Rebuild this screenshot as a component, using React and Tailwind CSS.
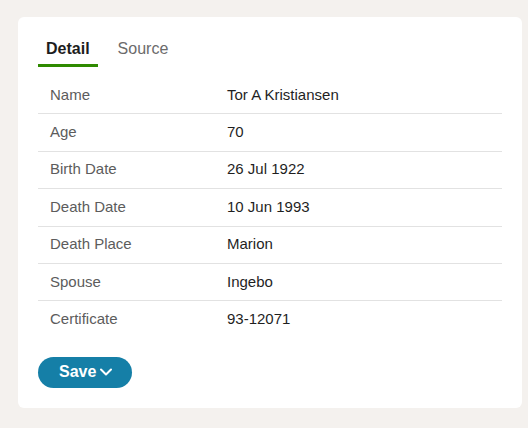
import React, { useState } from 'react';

const rows = [
  ['Name', 'Tor A Kristiansen'],
  ['Age', '70'],
  ['Birth Date', '26 Jul 1922'],
  ['Death Date', '10 Jun 1993'],
  ['Death Place', 'Marion'],
  ['Spouse', 'Ingebo'],
  ['Certificate', '93-12071'],
];

function Chevron() {
  return (
    <svg width="12" height="8" viewBox="0 0 12 8" fill="none" stroke="currentColor" strokeWidth="2" strokeLinecap="round" strokeLinejoin="round">
      <polyline points="1,1.5 6,6.5 11,1.5" />
    </svg>
  );
}

export default function App() {
  const [tab, setTab] = useState('detail');

  return (
    <div
      className="min-h-screen bg-[#f4f1ee] pt-[17px] pl-[18px] pr-[6px]"
      style={{ fontFamily: '"Liberation Sans", Arial, sans-serif' }}
    >
      <div className="bg-white rounded-md p-5">
        {/* Tabs */}
        <div className="flex gap-3">
          <button
            onClick={() => setTab('detail')}
            className={`px-2 pb-[3px] border-b-[3px] text-base leading-6 ${
              tab === 'detail' ? 'border-[#2f8a00] font-bold text-[#1d1d1d]' : 'border-transparent text-[#6b6b6b]'
            }`}
          >
            Detail
          </button>
          <button
            onClick={() => setTab('source')}
            className={`px-2 pb-[3px] border-b-[3px] text-base leading-6 ${
              tab === 'source' ? 'border-[#2f8a00] font-bold text-[#1d1d1d]' : 'border-transparent text-[#6b6b6b]'
            }`}
          >
            Source
          </button>
        </div>

        {/* Detail table */}
        <div className="mt-[10px]">
          {rows.map(([label, value], i) => (
            <div
              key={label}
              className={`grid grid-cols-[177px_1fr] text-[15px] leading-[20.4px] pt-[7.5px] pb-[8.5px] ${
                i < rows.length - 1 ? 'border-b border-[#e2e2e2]' : ''
              }`}
            >
              <div className="pl-3 text-[#5c5c5c]">{label}</div>
              <div className="pl-3 text-[#1f1f1f]">{value}</div>
            </div>
          ))}
        </div>

        <button className="mt-[19px] h-[31px] pl-[21px] pr-[20px] rounded-full bg-[#157fa7] text-white font-bold text-base flex items-center gap-1">
          Save
          <Chevron />
        </button>
      </div>
    </div>
  );
}
